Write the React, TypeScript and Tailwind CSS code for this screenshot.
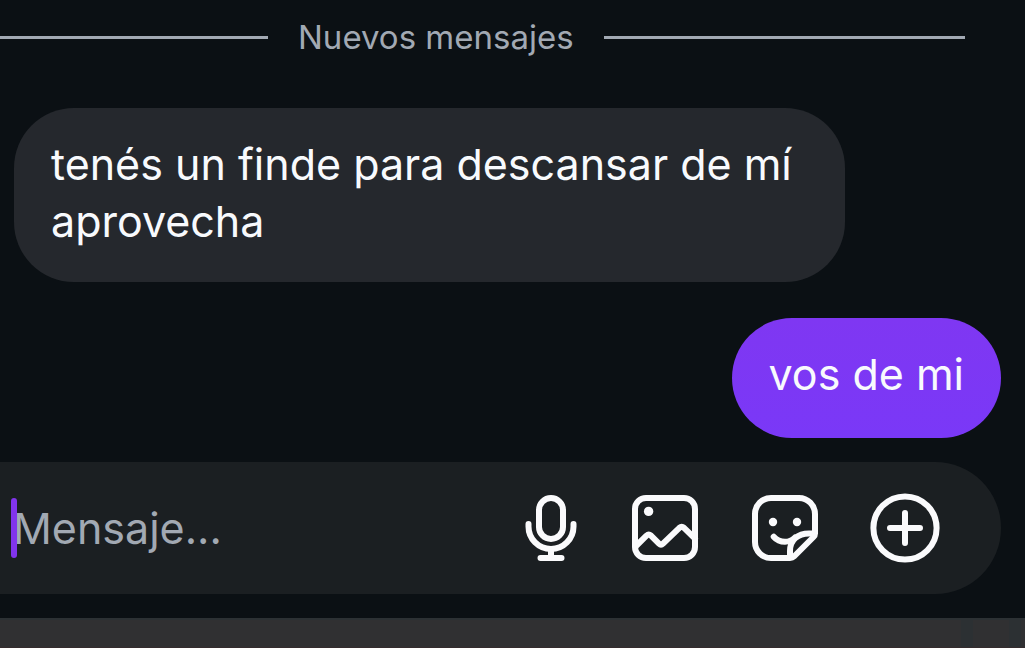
import React, { useState } from 'react';

type Message = {
  id: number;
  mine: boolean;
  text: string;
};

const messages: Message[] = [
  { id: 1, mine: false, text: 'tenés un finde para descansar de mí aprovecha' },
  { id: 2, mine: true, text: 'vos de mi' },
];

const strokeProps = {
  fill: 'none',
  stroke: 'currentColor',
  strokeWidth: 6,
  strokeLinecap: 'round',
  strokeLinejoin: 'round',
} as const;

const MicIcon = () => (
  <svg viewBox="0 0 60 72" className="h-[72px] w-[60px]" aria-hidden="true" {...strokeProps}>
    <rect x="18" y="6" width="24" height="41" rx="12" />
    <path d="M7.5 32v2.5a22.5 22.5 0 0 0 45 0V32" />
    <path d="M30 57v9M19.5 66h21" />
  </svg>
);

const ImageIcon = () => (
  <svg viewBox="0 0 72 72" className="size-[72px]" aria-hidden="true" {...strokeProps}>
    <rect x="6" y="6" width="60" height="60" rx="11" />
    <circle cx="19.6" cy="19.4" r="4.7" fill="currentColor" stroke="none" />
    <path d="M7 54 17.5 43.6Q19.7 41.6 22 43.6L30 51.6Q32 53.6 34 51.6L50.4 35.8Q52.7 33.8 55 35.8L66 46.5" />
  </svg>
);

const StickerIcon = () => (
  <svg viewBox="0 0 72 72" className="size-[72px]" aria-hidden="true" {...strokeProps}>
    <path d="M41 66H22A16 16 0 0 1 6 50V22A16 16 0 0 1 22 6H50A16 16 0 0 1 66 22V41.5Q66 43.5 64.5 45L45 64.5Q43.5 66 41 66Z" />
    <path d="M65 41.5H60C49 41.5 41 48 41 59V65" />
    <path d="M24.7 44.7C28 48.5 32 49.8 36 49.8C40 49.8 43 48.5 46 45.5" />
    <circle cx="24" cy="30" r="4.2" fill="currentColor" stroke="none" />
    <circle cx="48" cy="30" r="4.2" fill="currentColor" stroke="none" />
  </svg>
);

const PlusIcon = () => (
  <svg viewBox="0 0 72 72" className="size-[72px]" aria-hidden="true" {...strokeProps}>
    <circle cx="36" cy="36" r="31.6" />
    <path d="M36 21v30M21 36h30" />
  </svg>
);

const actions = [
  { label: 'Grabar audio', Icon: MicIcon },
  { label: 'Enviar foto', Icon: ImageIcon },
  { label: 'Stickers', Icon: StickerIcon },
  { label: 'Más opciones', Icon: PlusIcon },
];

const Divider = () => (
  <div className="flex items-center gap-[30px] pr-[60px] text-[#a2a9b3]">
    <span className="h-[3px] w-[268px] bg-current" />
    <span className="text-[33px] leading-[41px] whitespace-nowrap">Nuevos mensajes</span>
    <span className="h-[3px] flex-1 bg-current" />
  </div>
);

const Bubble = ({ message }: { message: Message }) => (
  <p
    className={`min-h-[120px] max-w-[831px] rounded-[60px] px-[37px] pt-7 pb-8 text-[43px] leading-[57px] text-[#f8fafd] ${
      message.mine ? 'self-end bg-linear-to-b from-[#7f37f2] to-[#7a38f7]' : 'self-start bg-[#25282d]'
    }`}
  >
    {message.text}
  </p>
);

const Composer = () => {
  const [text, setText] = useState('');

  return (
    <form
      onSubmit={(e) => e.preventDefault()}
      className="mt-6 mr-6 flex h-[132px] items-center gap-12 rounded-r-full bg-[#1b1f22] pr-[60px]"
    >
      <div className="relative flex min-w-0 flex-1 items-center">
        <input
          type="text"
          aria-label="Mensaje"
          placeholder="Mensaje..."
          value={text}
          onChange={(e) => setText(e.target.value)}
          className="w-full bg-transparent pl-[13px] text-[43px] leading-[60px] text-[#f8fafd] caret-[#8134ec] outline-none placeholder:text-[#a2a9b3]"
        />
        {text === '' && <span className="absolute left-[11px] h-[60px] w-[6px] rounded-full bg-[#8134ec]" />}
      </div>
      <div className="flex gap-12 text-[#fafafc]">
        {actions.map(({ label, Icon }) => (
          <button key={label} type="button" aria-label={label} className="cursor-pointer">
            <Icon />
          </button>
        ))}
      </div>
    </form>
  );
};

const App = () => {
  return (
    <main className="flex min-h-screen flex-col bg-[#0b1014] font-['Inter',sans-serif]">
      <div className="pt-[17px]">
        <Divider />
      </div>
      <section className="mt-[50px] flex flex-col gap-9 pr-6 pl-[14px]">
        {messages.map((message) => (
          <Bubble key={message.id} message={message} />
        ))}
      </section>
      <Composer />
      <div className="mt-6 flex flex-1 justify-end gap-9 border-t-2 border-b border-t-[#2c3134] border-b-[#352c2e] bg-[#303032] pr-1">
        <span className="w-3 bg-[#2c3033]" />
        <span className="w-3 bg-[#2c3033]" />
      </div>
    </main>
  );
};

export default App;
